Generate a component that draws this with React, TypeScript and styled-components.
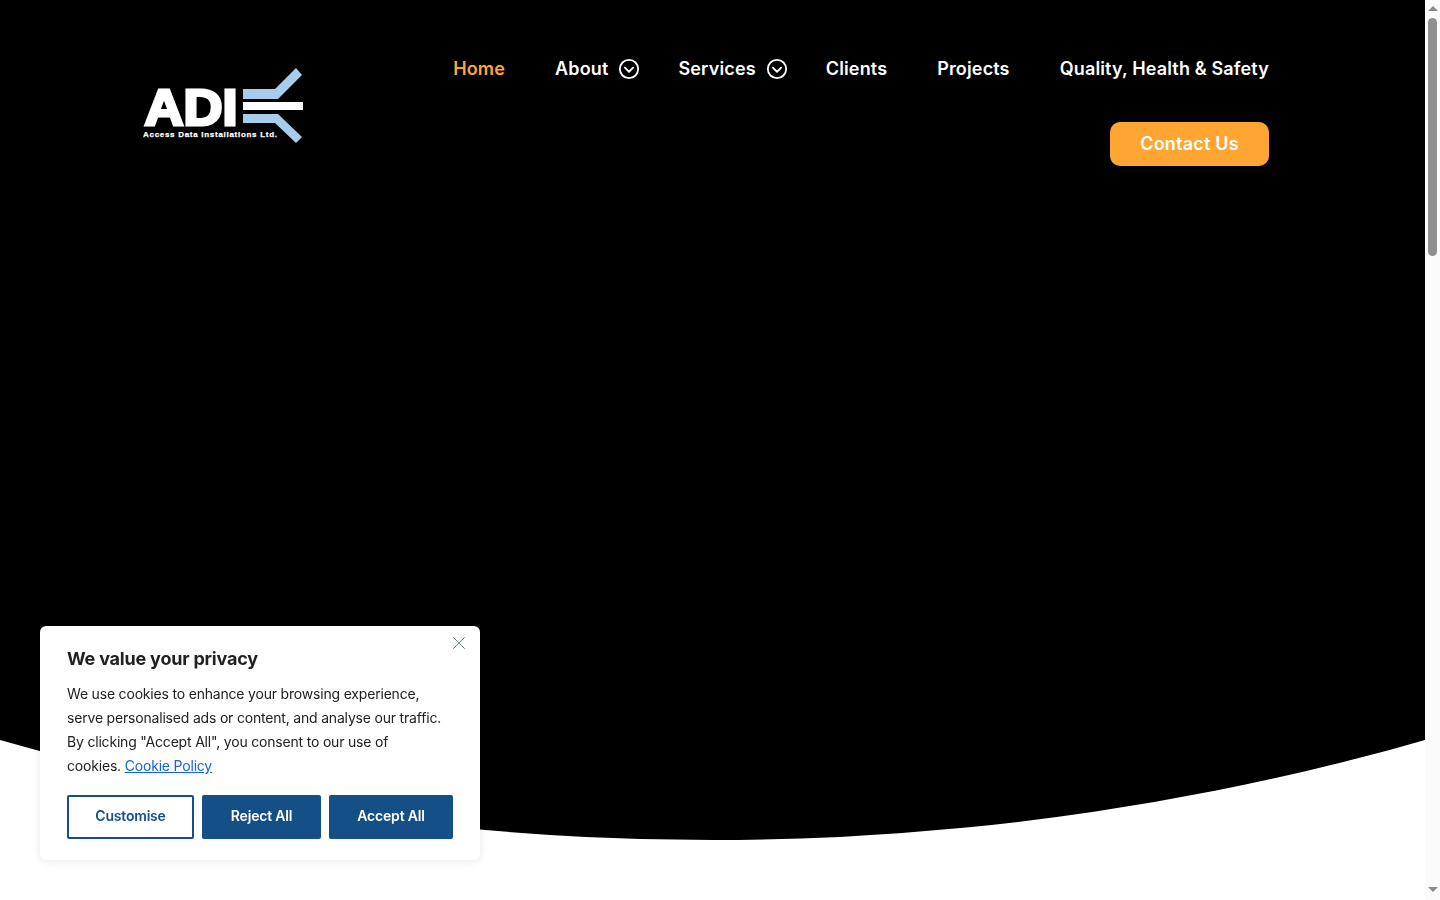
import styled, { createGlobalStyle } from "styled-components";
import { X } from "lucide-react";

const FONT = `"Inter", "Roboto", "Liberation Sans", sans-serif`;

const GlobalStyle = createGlobalStyle`
  html, body {
    margin: 0;
    padding: 0;
    background: #fff;
    font-family: ${FONT};
  }
  * {
    box-sizing: border-box;
  }
`;

const Page = styled.div`
  display: grid;
  grid-template-columns: 1fr 15px;
  height: 100vh;
  overflow: hidden;
  background: #fff;
`;

const Hero = styled.section`
  height: 840px;
  background: #000;
  clip-path: circle(2588px at 50% -1748px);
`;

const Header = styled.header`
  display: flex;
  justify-content: space-between;
  align-items: flex-start;
  padding: 56px 156px 0 143px;
`;

const LogoMark = styled.svg`
  display: block;
  width: 160px;
  height: 76px;
  margin-top: 12px;
`;

const Nav = styled.nav`
  display: flex;
  flex-direction: column;
  align-items: flex-end;
`;

const NavLinks = styled.ul`
  display: flex;
  align-items: center;
  gap: 50px;
  list-style: none;
  margin: 0;
  padding: 0;
  height: 25px;
`;

const NavItem = styled.li<{ $hasMenu?: boolean }>`
  display: flex;
  align-items: center;
  gap: 10px;
  margin-right: ${(props) => (props.$hasMenu ? "-12px" : "0")};
`;

const NavLink = styled.a<{ $active?: boolean }>`
  color: ${(props) => (props.$active ? "#ffa632" : "#fff")};
  font-size: 18px;
  font-weight: 600;
  letter-spacing: 0.15px;
  line-height: 25px;
  white-space: nowrap;
  text-decoration: none;
`;

const MenuIcon = styled.svg`
  display: block;
  width: 22px;
  height: 22px;
  fill: none;
  stroke: #fff;
  stroke-width: 2;
  stroke-linecap: round;
  stroke-linejoin: round;
`;

const ContactButton = styled.a`
  display: flex;
  align-items: center;
  justify-content: center;
  width: 159px;
  height: 44px;
  margin-top: 41px;
  padding-bottom: 1px;
  background: #ffa632;
  border-radius: 10px;
  color: #fff;
  font-size: 18px;
  font-weight: 600;
  letter-spacing: 0.2px;
`;

const Scrollbar = styled.div`
  display: flex;
  flex-direction: column;
  align-items: center;
  height: 100%;
  background: #fbfbfb;
`;

const ScrollArrow = styled.span<{ $down?: boolean }>`
  width: 0;
  height: 0;
  margin-top: ${(props) => (props.$down ? "auto" : "6px")};
  margin-bottom: ${(props) => (props.$down ? "8px" : "0")};
  border-left: 5px solid transparent;
  border-right: 5px solid transparent;
  border-top: ${(props) => (props.$down ? "5px solid #8a8a8a" : "0")};
  border-bottom: ${(props) => (props.$down ? "0" : "5px solid #8a8a8a")};
`;

const ScrollThumb = styled.div`
  width: 9px;
  height: 238px;
  margin-top: 7px;
  background: #8f8f8f;
  border-radius: 5px;
`;

const CookieBanner = styled.aside`
  position: fixed;
  left: 40px;
  bottom: 40px;
  width: 440px;
  height: 234px;
  padding: 22px 27px 0;
  background: #fff;
  border-radius: 6px;
  box-shadow: 0 1px 10px rgba(0, 0, 0, 0.1);
  color: #212121;
`;

const CloseButton = styled.button`
  position: absolute;
  top: 6px;
  right: 10px;
  display: flex;
  padding: 0;
  border: 0;
  background: none;
  color: #5f7d9c;
`;

const CookieTitle = styled.h2`
  margin: 0 0 12px;
  font-size: 18px;
  font-weight: 700;
  letter-spacing: -0.2px;
  line-height: 22px;
`;

const CookieText = styled.p`
  max-width: 377px;
  margin: 0;
  font-size: 14px;
  letter-spacing: -0.19px;
  line-height: 24px;
`;

const CookieLink = styled.a`
  color: #1863dc;
  text-decoration: underline;
`;

const CookieActions = styled.div`
  display: flex;
  gap: 8px;
  margin-top: 17px;
`;

const CookieButton = styled.button<{ $outline?: boolean; $width: number }>`
  width: ${(props) => props.$width}px;
  height: 44px;
  padding: 0 0 4px;
  border: 2px solid #144f85;
  border-radius: 2px;
  background: ${(props) => (props.$outline ? "#fff" : "#144f85")};
  color: ${(props) => (props.$outline ? "#144f85" : "#fff")};
  font-family: ${FONT};
  font-size: 14px;
  font-weight: 600;
  letter-spacing: -0.2px;
`;

const navItems = [
  { label: "Home", active: true },
  { label: "About", menu: true },
  { label: "Services", menu: true },
  { label: "Clients" },
  { label: "Projects" },
  { label: "Quality, Health & Safety" },
];

const Logo = () => (
  <LogoMark viewBox="0 0 160 76" aria-label="ADI logo">
    <text
      x="1.5"
      y="56.5"
      fill="#fff"
      stroke="#fff"
      strokeWidth="3"
      fontFamily="Liberation Sans, sans-serif"
      fontSize="50"
      fontWeight="700"
      textLength="93"
      lengthAdjust="spacingAndGlyphs"
    >
      ADI
    </text>
    <text
      x="0"
      y="68.5"
      fill="#fff"
      stroke="#fff"
      strokeWidth="0.25"
      fontFamily="Liberation Sans, sans-serif"
      fontSize="8"
      fontWeight="700"
      textLength="134"
      lengthAdjust="spacing"
    >
      Access Data Installations Ltd.
    </text>
    <path d="M100 34h60v8h-60z" fill="#fff" />
    <path d="M100 21h32l21-21 6 7-24 24h-35z" fill="#a8cdec" />
    <path d="M100 46h35l24 23-6 6-21-20h-32z" fill="#a8cdec" />
  </LogoMark>
);

const App = () => {
  return (
    <Page>
      <GlobalStyle />
      <Hero>
        <Header>
          <Logo />
          <Nav>
            <NavLinks>
              {navItems.map((item) => (
                <NavItem key={item.label} $hasMenu={item.menu}>
                  <NavLink $active={item.active}>{item.label}</NavLink>
                  {item.menu && (
                    <MenuIcon viewBox="0 0 24 24">
                      <circle cx="12" cy="12" r="10" />
                      <path d="m7.5 10.5 4.5 4.5 4.5-4.5" />
                    </MenuIcon>
                  )}
                </NavItem>
              ))}
            </NavLinks>
            <ContactButton>Contact Us</ContactButton>
          </Nav>
        </Header>
      </Hero>
      <Scrollbar>
        <ScrollArrow />
        <ScrollThumb />
        <ScrollArrow $down />
      </Scrollbar>
      <CookieBanner>
        <CloseButton>
          <X size={22} strokeWidth={1} />
        </CloseButton>
        <CookieTitle>We value your privacy</CookieTitle>
        <CookieText>
          We use cookies to enhance your browsing experience, serve personalised ads or content,
          and analyse our traffic. By clicking "Accept All", you consent to our use of cookies.{" "}
          <CookieLink>Cookie Policy</CookieLink>
        </CookieText>
        <CookieActions>
          <CookieButton $outline $width={127}>Customise</CookieButton>
          <CookieButton $width={119}>Reject All</CookieButton>
          <CookieButton $width={124}>Accept All</CookieButton>
        </CookieActions>
      </CookieBanner>
    </Page>
  );
};

export default App;
